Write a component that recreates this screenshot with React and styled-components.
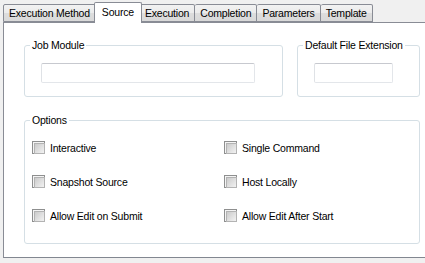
import React from 'react';
import styled, { createGlobalStyle } from 'styled-components';

const GlobalStyle = createGlobalStyle`
  html, body {
    margin: 0;
    padding: 0;
    background: #f0f0f0;
  }
  * {
    box-sizing: border-box;
  }
`;

// ventana entera
const Window = styled.div`
  width: 425px;
  height: 263px;
  overflow: hidden;
  background: #f0f0f0;
  font-family: "Liberation Sans", Arial, sans-serif;
  font-size: 10.5px;
  letter-spacing: -0.2px;
  color: #000;
`;

const TabStrip = styled.div`
  display: flex;
  align-items: flex-end;
  height: 22px;
  padding-left: 3px;
  position: relative;
  z-index: 1;
`;

const Tab = styled.div`
  height: ${(p) => (p.$active ? '21px' : '18px')};
  margin: ${(p) => (p.$active ? '0 -2px' : '0')};
  margin-bottom: ${(p) => (p.$active ? '-1px' : '0')};
  padding: ${(p) => (p.$active ? '3px 7px 0' : '2px 5px 0')};
  border: 1px solid #898c95;
  border-bottom: ${(p) => (p.$active ? 'none' : '1px solid #898c95')};
  border-left: ${(p) => (p.$first || p.$active ? '1px solid #898c95' : 'none')};
  background: ${(p) =>
    p.$active ? '#ffffff' : 'linear-gradient(#f2f2f2, #ebebeb 50%, #dddddd 51%, #d9d9d9)'};
  border-radius: 2px 2px 0 0;
  position: relative;
  z-index: ${(p) => (p.$active ? 2 : 1)};
  white-space: nowrap;
`;

const Panel = styled.div`
  height: 236px;
  margin-left: 3px;
  background: #fff;
  border-top: 1px solid #898c95;
  border-left: 1px solid #898c95;
  border-bottom: 1px solid #828790;
  padding: 16px 0 0 20px;
`;

const TopRow = styled.div`
  display: flex;
  gap: 14px;
`;

const Group = styled.fieldset`
  margin: 0;
  padding: 0 0 0 16px;
  min-width: 0;
  width: ${(p) => p.$w}px;
  height: ${(p) => p.$h}px;
  border: 1px solid #d5dfe5;
  border-radius: 3px;
`;

const Legend = styled.legend`
  padding: 0 2px;
  margin-left: ${(p) => p.$shift}px;
  line-height: 13px;
`;

const TextBox = styled.div`
  width: ${(p) => p.$w}px;
  height: 20px;
  margin-top: 11px;
  background: #fff;
  border: 1px solid;
  border-color: #c7c9cf #e3e6ea #e3e6ea #dfe2e6;
  border-radius: 2px;
`;

const OptionsGroup = styled(Group)`
  margin-top: 17px;
  padding-left: 7px;
`;

const OptionGrid = styled.div`
  display: grid;
  grid-template-columns: 192px 1fr;
  row-gap: 21px;
  padding-top: 14px;
`;

const Option = styled.label`
  display: flex;
  align-items: center;
  gap: 5px;
  height: 13px;
  white-space: nowrap;
`;

const Box = styled.span`
  width: 13px;
  height: 13px;
  flex: none;
  border: 1px solid #8e8f8f;
  background: #f4f4f4;
  padding: 1px;

  &::after {
    content: '';
    display: block;
    width: 100%;
    height: 100%;
    border: 1px solid #b3b3b3;
    background: linear-gradient(135deg, #cbcbcb, #f2f2f2);
  }
`;

const tabs = ['Execution Method', 'Source', 'Execution', 'Completion', 'Parameters', 'Template'];

const options = [
  'Interactive',
  'Single Command',
  'Snapshot Source',
  'Host Locally',
  'Allow Edit on Submit',
  'Allow Edit After Start',
];

const App = () => {
  return (
    <Window>
      <GlobalStyle />
      <TabStrip>
        {tabs.map((t, i) => (
          <Tab key={t} $first={i === 0} $active={t === 'Source'}>
            {t}
          </Tab>
        ))}
      </TabStrip>
      <Panel>
        <TopRow>
          <Group $w={259} $h={58}>
            <Legend $shift={-11}>Job Module</Legend>
            <TextBox $w={214} />
          </Group>
          <Group $w={123} $h={58}>
            <Legend $shift={-11}>Default File Extension</Legend>
            <TextBox $w={79} />
          </Group>
        </TopRow>
        <OptionsGroup $w={396} $h={130}>
          <Legend $shift={-2}>Options</Legend>
          <OptionGrid>
            {options.map((o) => (
              <Option key={o}>
                <Box />
                {o}
              </Option>
            ))}
          </OptionGrid>
        </OptionsGroup>
      </Panel>
    </Window>
  );
};

export default App;
